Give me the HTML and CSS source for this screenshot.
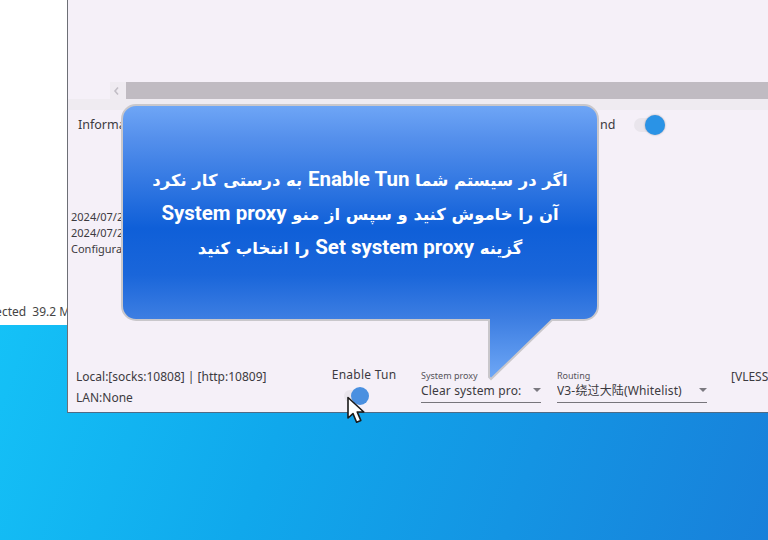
FILE: index.html
```html
<!DOCTYPE html>
<html lang="en">
<head>
<meta charset="utf-8">
<title>v2rayN</title>
<link rel="stylesheet" href="styles.css">
</head>
<body>
<div class="desktop">
  <div class="back-window"><span class="back-status">Selected&nbsp; 39.2 MB</span></div>
  <div class="main-window">
    <div class="list-area"></div>
    <div class="scrollbar">
      <div class="scroll-btn"><svg width="8" height="10" viewBox="0 0 8 10"><path d="M5 1.5 2 5l3 3.5" fill="none" stroke="#c2bec6" stroke-width="1.6"/></svg></div>
      <div class="scroll-track"></div>
    </div>
    <div class="splitter"></div>
    <div class="log-head">
      <span class="log-title">Information</span>
      <span class="log-right">nd</span>
      <span class="toggle"><i class="knob"></i></span>
    </div>
    <div class="log-body">
      <div>2024/07/25 10:12:41</div>
      <div>2024/07/25 10:12:41</div>
      <div>Configuration</div>
    </div>
    <div class="status-bar">
      <div class="ports">
        <div>Local:[socks:10808] | [http:10809]</div>
        <div>LAN:None</div>
      </div>
      <div class="tun">
        <div class="tun-label">Enable Tun</div>
        <span class="toggle small"><i class="knob"></i></span>
      </div>
      <div class="select proxy">
        <div class="select-label">System proxy</div>
        <div class="select-value"><span class="select-text">Clear system pro:</span><i class="caret"></i></div>
      </div>
      <div class="select routing">
        <div class="select-label">Routing</div>
        <div class="select-value"><span class="select-text">V3-绕过大陆(Whitelist)</span><i class="caret"></i></div>
      </div>
      <div class="server">[VLESS] tcp</div>
    </div>
  </div>

  <svg class="bubble-shape" width="484" height="280" viewBox="0 0 484 280">
    <defs>
      <linearGradient id="bubbleFill" gradientUnits="userSpaceOnUse" x1="0" y1="2" x2="0" y2="276">
        <stop offset="0" stop-color="#6fa6f6"/>
        <stop offset="0.12" stop-color="#5590ec"/>
        <stop offset="0.45" stop-color="#0f5fd8"/>
        <stop offset="0.62" stop-color="#1a66da"/>
        <stop offset="0.78" stop-color="#3d7ee2"/>
        <stop offset="1" stop-color="#6fa8f6"/>
      </linearGradient>
    </defs>
    <path d="M16 2H464a14 14 0 0 1 14 14V203a14 14 0 0 1-14 14H432L371 276 369 274V217H16a14 14 0 0 1-14-14V16A14 14 0 0 1 16 2Z" fill="url(#bubbleFill)" stroke="#c9c7cb" stroke-width="2"/>
  </svg>
  <div class="bubble-text" dir="rtl" lang="fa">
    <div>اگر در سیستم شما <span class="latin">Enable Tun</span> به درستی کار نکرد</div>
    <div>آن را خاموش کنید و سپس از منو <span class="latin">System proxy</span></div>
    <div>گزینه <span class="latin">Set system proxy</span> را انتخاب کنید</div>
  </div>

  <svg class="cursor" width="20" height="30" viewBox="0 0 20 30">
    <path d="M2 1.5V22l5-4.4 3.6 8.6 4.2-1.8-3.6-8.4h6.6Z" fill="#fff" stroke="#1a1a1a" stroke-width="1.6" stroke-linejoin="round"/>
  </svg>
</div>
</body>
</html>
```

FILE: styles.css
```css
* { box-sizing: border-box; }
html, body { margin: 0; padding: 0; }
body { width: 768px; height: 540px; overflow: hidden; font-family: "Noto Sans", "Open Sans", sans-serif; }
.desktop { position: relative; width: 768px; height: 540px; overflow: hidden; background: linear-gradient(110deg, #16cbfb 0%, #10a8ec 45%, #1880da 100%); }

.back-window { position: absolute; left: 0; top: 0; width: 68px; height: 325px; background: #fff; display: flex; justify-content: flex-end; align-items: flex-end; overflow: hidden; padding-bottom: 5px; }
.back-status { font-size: 12px; line-height: 16px; color: #444; white-space: nowrap; flex: none; margin-right: -10px; }

.main-window { position: absolute; left: 67px; top: 0; width: 720px; height: 413px; display: flex; flex-direction: column; background: #f5f0f8; border-left: 1px solid #6d6f76; border-bottom: 1px solid #4f6b85; color: #3c3a40; font-size: 12px; }
.list-area { height: 82px; flex: none; }
.scrollbar { height: 17px; flex: none; display: flex; padding-left: 42px; }
.scroll-btn { width: 16px; display: flex; align-items: center; justify-content: center; padding-right: 3px; background: #efebf1; }
.scroll-track { flex: 1; background: #c0bbc2; }
.splitter { height: 11px; flex: none; background: #efebf1; }
.log-head { height: 30px; flex: none; display: flex; align-items: center; padding: 0 0 1px 10px; font-size: 12.5px; }
.log-title { width: 522px; flex: none; }
.log-right { width: 34px; flex: none; }
.toggle { position: relative; display: block; width: 31px; height: 14px; border-radius: 7px; background: #e9e5ec; flex: none; }
.knob { position: absolute; right: 0; top: -3px; width: 20px; height: 20px; border-radius: 50%; background: #2a93e6; box-shadow: 0 0 2px rgba(60,60,70,.45); }
.log-body { flex: none; height: 209px; padding: 69px 0 0 3px; font-size: 11px; line-height: 16px; }
.status-bar { flex: 1; display: flex; align-items: flex-start; padding-left: 8px; white-space: nowrap; }
.ports { width: 244px; flex: none; padding-top: 17px; font-size: 12px; line-height: 21px; }
.tun { width: 88px; flex: none; margin-right: 13px; padding-top: 18px; display: flex; flex-direction: column; align-items: center; }
.tun-label { font-size: 12px; line-height: 16px; letter-spacing: 0.25px; }
.toggle.small { align-self: flex-start; width: 20px; height: 12px; margin: 7px 0 0 24px; background: #e9e5ec; }
.toggle.small .knob { width: 18px; height: 18px; top: -3px; right: -5px; background: #4a90e0; box-shadow: none; }
.select { display: flex; flex-direction: column; padding-top: 21px; flex: none; }
.proxy { width: 120px; margin-right: 16px; }
.routing { width: 150px; margin-right: 24px; }
.select-label { font-size: 9px; line-height: 11px; color: #55535a; }
.select-value { display: flex; align-items: center; justify-content: space-between; height: 22px; border-bottom: 1px solid #77757b; font-size: 12px; letter-spacing: 0.15px; padding-bottom: 3px; font-family: "Noto Sans", "Noto Sans CJK SC", sans-serif; }
.select-text { overflow: hidden; }
.caret { width: 0; height: 0; border-left: 4.5px solid transparent; border-right: 4.5px solid transparent; border-top: 4.5px solid #7b7980; }
.server { flex: none; padding-top: 17px; font-size: 12px; line-height: 21px; }

.bubble-shape { position: absolute; left: 120px; top: 103px; }
.bubble-text { position: absolute; left: 122px; top: 163px; width: 476px; text-align: center; color: #fff; font-family: "DejaVu Sans", sans-serif; font-weight: 700; font-size: 16.4px; line-height: 33px; white-space: nowrap; }
.latin { font-family: Roboto, sans-serif; font-size: 20.5px; }

.cursor { position: absolute; left: 346px; top: 396px; }
```
